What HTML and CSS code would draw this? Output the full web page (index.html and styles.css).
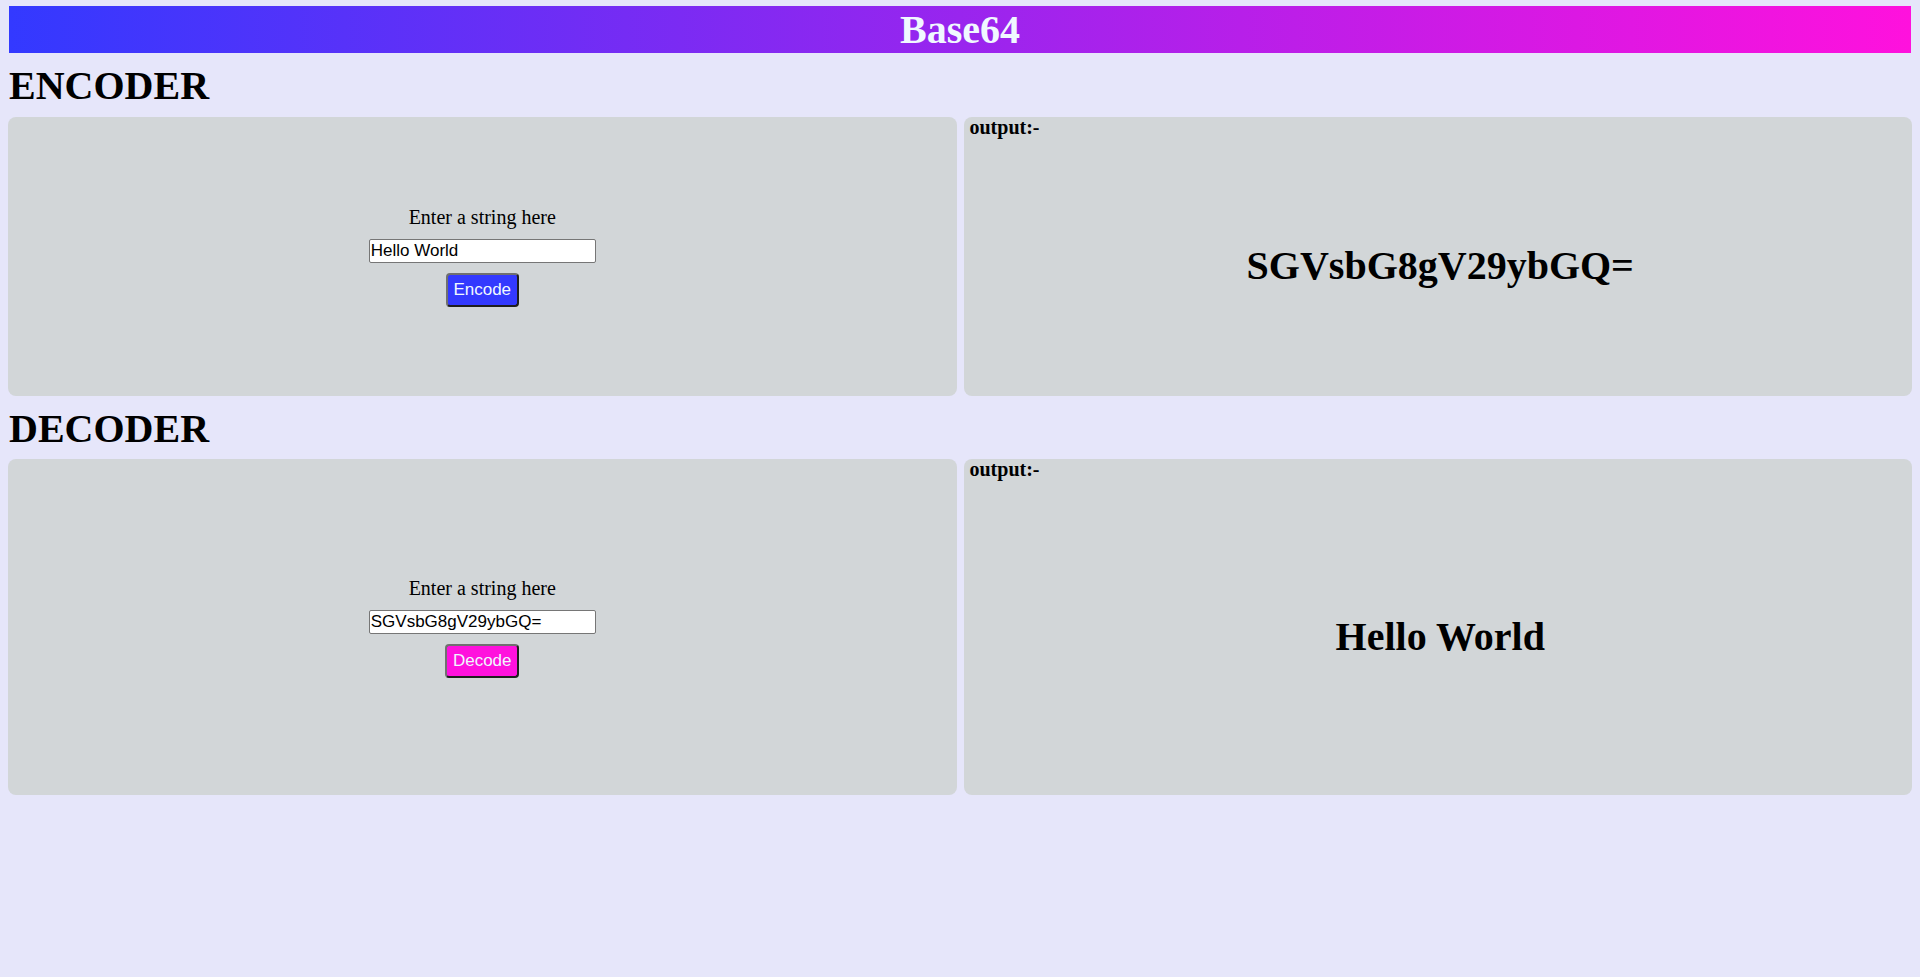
FILE: index.html
```html
<!DOCTYPE html>
<html lang="en">
<head>
<meta charset="utf-8">
<title>Base64</title>
<link rel="stylesheet" href="styles.css">
</head>
<body>
<div class="page">
  <header class="banner">Base64</header>

  <h2 class="section-title">ENCODER</h2>
  <div class="row row-encoder">
    <div class="card card-input">
      <div class="form">
        <label class="form-label" for="enc">Enter a string here</label>
        <input class="form-input" id="enc" type="text" value="Hello World">
        <button class="btn btn-encode">Encode</button>
      </div>
    </div>
    <div class="card card-output">
      <div class="output-label">output:-</div>
      <div class="output-body"><span class="output-text">SGVsbG8gV29ybGQ=</span></div>
    </div>
  </div>

  <h2 class="section-title">DECODER</h2>
  <div class="row row-decoder">
    <div class="card card-input">
      <div class="form">
        <label class="form-label" for="dec">Enter a string here</label>
        <input class="form-input" id="dec" type="text" value="SGVsbG8gV29ybGQ=">
        <button class="btn btn-decode">Decode</button>
      </div>
    </div>
    <div class="card card-output">
      <div class="output-label">output:-</div>
      <div class="output-body"><span class="output-text">Hello World</span></div>
    </div>
  </div>
</div>
</body>
</html>
```

FILE: styles.css
```css
html, body {
  margin: 0;
  padding: 0;
}

body {
  background: #e6e6fa;
  font-family: "Liberation Serif", "Times New Roman", serif;
  color: #000;
  min-height: 977px;
}

.page {
  padding: 6px 8px 0 8px;
}

.banner {
  height: 47px;
  margin: 0 1px;
  line-height: 47px;
  background: linear-gradient(to right, #3339ff, #ff11dd);
  color: #f0f8ff;
  font-size: 40px;
  font-weight: bold;
  text-align: center;
}

.section-title {
  margin: 10px 0 7.5px 1px;
  font-size: 40px;
  line-height: 46px;
  font-weight: bold;
}

.row {
  display: grid;
  grid-template-columns: 1fr 1fr;
  gap: 7px;
}

.row-encoder .card {
  height: 279px;
}

.row-decoder .card {
  height: 336px;
}

.card {
  background: #d2d6d8;
  border-radius: 8px;
  box-sizing: border-box;
}

.card-input {
  display: flex;
  align-items: center;
  justify-content: center;
}

.form {
  display: flex;
  flex-direction: column;
  align-items: center;
  gap: 10px;
}

.form-label {
  font-size: 20px;
  line-height: 23px;
}

.form-input {
  box-sizing: border-box;
  width: 227px;
  height: 24px;
  margin: 0;
  padding: 0 1px;
  border: 1px solid #767676;
  border-radius: 2px;
  background: #fff;
  font-family: "Liberation Sans", Arial, sans-serif;
  font-size: 17px;
  color: #000;
}

.btn {
  box-sizing: border-box;
  height: 34px;
  margin: 0;
  padding: 0 5.5px;
  border: 2px solid;
  border-color: #707070 #1e1e1e #1e1e1e #707070;
  border-radius: 4px;
  color: #f0f8ff;
  font-family: "Liberation Sans", Arial, sans-serif;
  font-size: 17px;
  line-height: 30px;
}

.btn-encode {
  background: #3339ff;
}

.btn-decode {
  background: #ff11dd;
}

.card-output {
  display: flex;
  flex-direction: column;
}

.output-label {
  padding-left: 6px;
  font-size: 20px;
  line-height: 20px;
  font-weight: bold;
}

.output-body {
  flex: 1;
  display: flex;
  align-items: center;
  justify-content: center;
  padding-left: 5px;
}

.output-text {
  font-size: 40px;
  line-height: 46px;
  font-weight: bold;
}
```
